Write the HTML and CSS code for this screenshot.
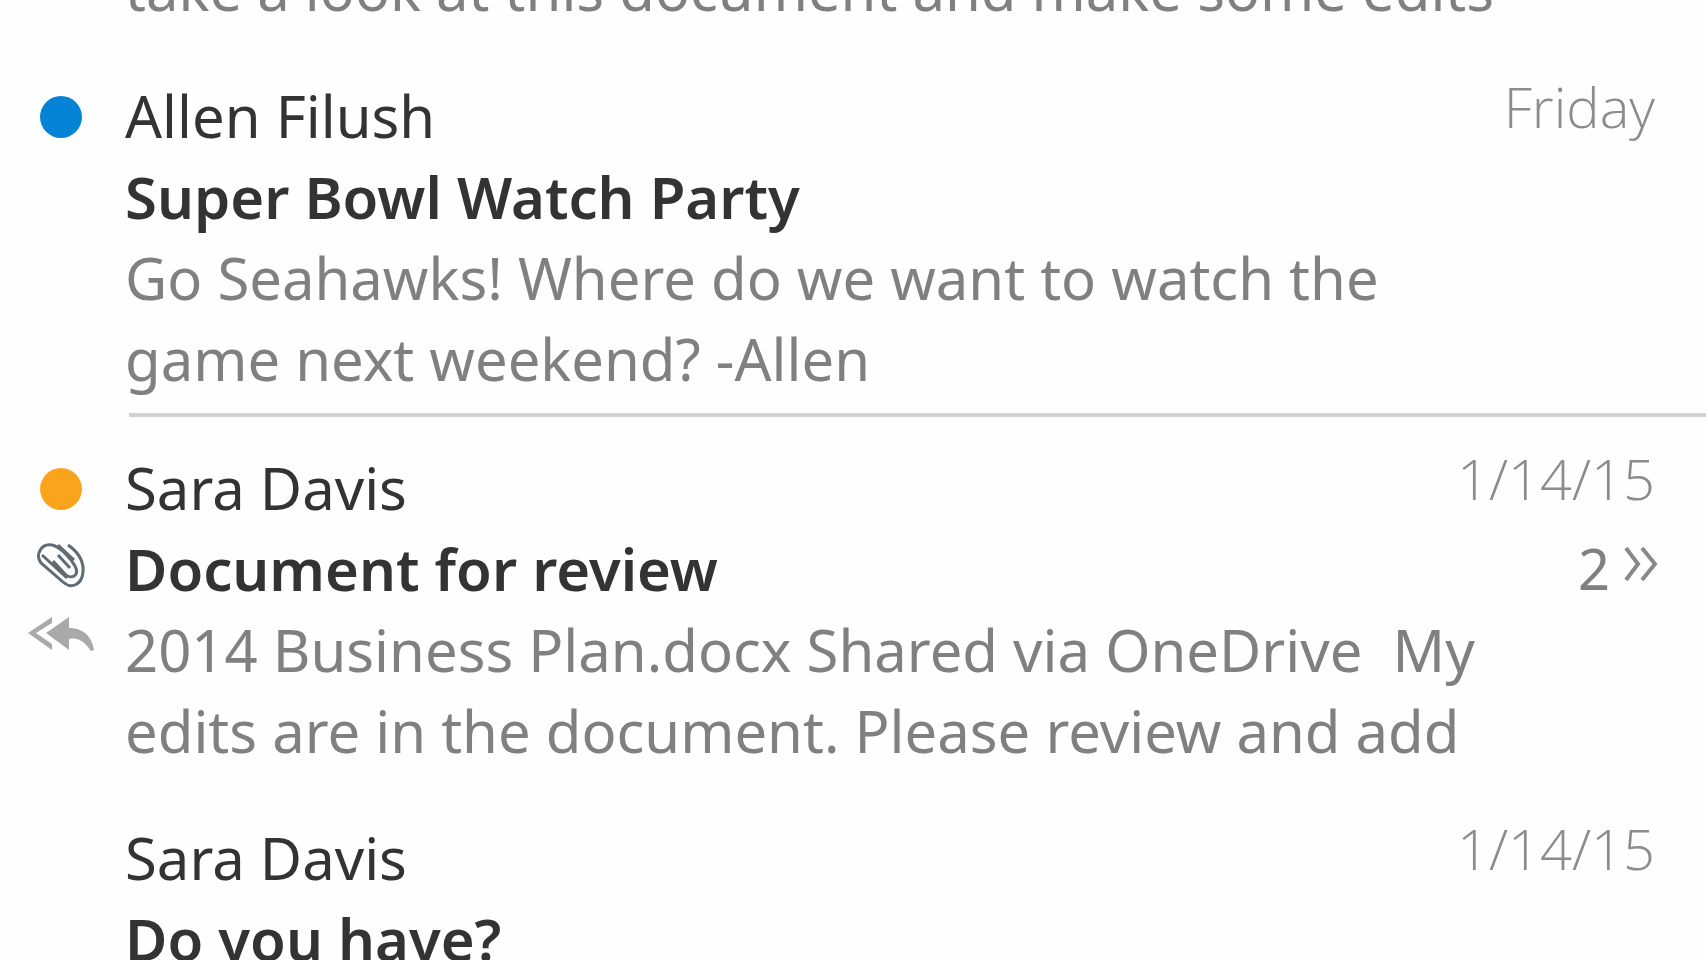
FILE: index.html
```html
<!DOCTYPE html>
<html lang="en">
<head>
<meta charset="utf-8">
<title>Inbox</title>
<link rel="stylesheet" href="styles.css">
</head>
<body>
<main class="inbox">
  <ul class="messages">
    <li class="message message--continued">
      <div class="gutter"></div>
      <p class="preview">take a look at this document and make some edits</p>
    </li>
    <li class="message">
      <div class="gutter"><span class="dot dot--blue"></span></div>
      <article class="body body--divided">
        <header class="row">
          <span class="sender">Allen Filush</span>
          <time class="date">Friday</time>
        </header>
        <h2 class="subject">Super Bowl Watch Party</h2>
        <p class="preview">Go Seahawks! Where do we want to watch the<br>game next weekend? -Allen</p>
      </article>
    </li>
    <li class="message">
      <div class="gutter">
        <span class="dot dot--orange"></span>
        <svg class="clip" viewBox="0 0 50 46" aria-hidden="true">
          <path d="M32 3C42 10 48 19 47 30C46 42 36 48 27 40L5 21C-1 13 5 1 16 3C25 5 35 17 39 24C44 34 35 38 29 32L17 19M22 3L38 18M6 13L31 36M22 13L34 26"/>
        </svg>
        <svg class="reply" viewBox="0 0 68 36" aria-hidden="true">
          <path d="M25 1L1 17L25 34V28L9 17L25 7Z"/>
          <path d="M42 1L19 17L42 34V23C51 21 58 26 64 35L67 34C65 20 56 12 42 12Z"/>
        </svg>
      </div>
      <article class="body">
        <header class="row">
          <span class="sender">Sara Davis</span>
          <time class="date">1/14/15</time>
        </header>
        <div class="row row--center">
          <h2 class="subject">Document for review</h2>
          <button class="thread" type="button" aria-label="2 messages, expand">2
            <svg class="chevrons" viewBox="0 0 34 34" aria-hidden="true"><path d="M2 1L14 17L2 33M18 1L31 17L18 33"/></svg>
          </button>
        </div>
        <p class="preview">2014 Business Plan.docx Shared via OneDrive&nbsp; My<br>edits are in the document. Please review and add</p>
      </article>
    </li>
    <li class="message">
      <div class="gutter"></div>
      <article class="body">
        <header class="row">
          <span class="sender">Sara Davis</span>
          <time class="date">1/14/15</time>
        </header>
        <h2 class="subject">Do you have?</h2>
      </article>
    </li>
  </ul>
</main>
</body>
</html>
```
FILE: styles.css
```css
* { box-sizing: border-box; }

body {
  margin: 0;
  background: #fefefe;
  color: #333;
  font: 400 58px/81px "Noto Sans", "Open Sans", sans-serif;
}

.inbox {
  height: 100vh;
  overflow: hidden;
}

.messages {
  list-style: none;
  margin: -52px 0 0;
  padding: 0;
}

.message {
  display: grid;
  grid-template-columns: 125px minmax(0, 1fr);
  margin-bottom: 46px;
}

.gutter {
  display: flex;
  flex-direction: column;
  align-items: center;
  gap: 32px;
  padding: 21px 3px 0 0;
}

.dot {
  width: 42px;
  height: 42px;
  border-radius: 50%;
}

.dot--blue { background: #0482d5; }
.dot--orange { background: #faa41e; }

.clip {
  width: 50px;
  height: 46px;
  fill: none;
  stroke: #606b73;
  stroke-width: 3;
}

.reply {
  width: 68px;
  height: 36px;
  margin-top: -4px;
  fill: #a9a9a9;
}

.body--divided {
  margin-bottom: -16px;
}

.body--divided::after {
  content: "";
  display: block;
  height: 4px;
  margin: 14px 0 0 4px;
  background: #d2d2d2;
}

.row {
  display: flex;
  justify-content: space-between;
  align-items: flex-start;
  padding-right: 51px;
}

.row--center {
  align-items: center;
  padding-right: 48px;
}

.date {
  color: #8c8c8c;
  font-family: "Open Sans", "Noto Sans", sans-serif;
  font-size: 56px;
  font-weight: 300;
  line-height: 63px;
}

.subject {
  margin: 0;
  font-size: 58px;
  font-weight: 600;
}

.preview {
  margin: 0;
  color: #808080;
  white-space: nowrap;
}

.thread {
  display: flex;
  align-items: center;
  gap: 14px;
  padding: 0;
  border: 0;
  background: none;
  color: #808080;
  font: inherit;
  font-size: 56px;
}

.chevrons {
  width: 34px;
  height: 34px;
  margin-bottom: 10px;
  fill: none;
  stroke: #8a8a8a;
  stroke-width: 4;
}
```
